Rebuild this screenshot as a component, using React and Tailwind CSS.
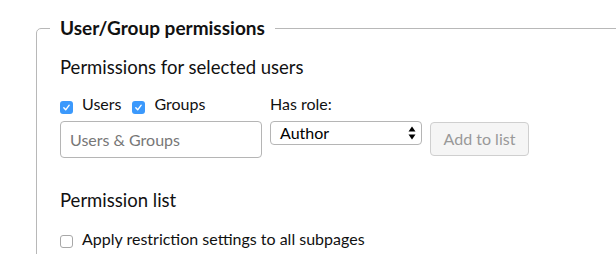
import React from "react";

function Check({ checked, className = "" }) {
  if (checked) {
    return (
      <span className={"flex h-[13px] w-[13px] shrink-0 items-center justify-center rounded-[3px] bg-[#3b99fc] " + className}>
        <svg width="9" height="9" viewBox="0 0 9 9" className="block">
          <path d="M1.8 4.8 L3.7 6.8 L7.2 2.2" fill="none" stroke="#fff" strokeWidth="1.4" strokeLinecap="round" strokeLinejoin="round" />
        </svg>
      </span>
    );
  }
  return <span className={"block h-[13px] w-[13px] shrink-0 rounded-[3px] border border-[#a8a8a8] bg-white " + className} />;
}

export default function App() {
  return (
    <div className="h-[254px] w-[616px] overflow-hidden bg-white text-[#111] [font-family:Lato,'Open_Sans',sans-serif]">
      <fieldset className="ml-[36px] mt-[17px] w-[620px] rounded-tl-[5px] border border-[#b8b8b8] pb-[40px] pl-[13px]">
        <legend className="px-[10px] text-[19px] font-bold leading-[22px]">User/Group permissions</legend>
        <div className="pl-[10px]">
          <div className="mt-[17px] text-[18.5px] leading-[22px]">Permissions for selected users</div>
          <div className="mt-[17px] flex items-start gap-[8px]">
            <div className="w-[202px]">
              <div className="flex h-[18px] items-start text-[16px] leading-[18px]">
                <Check checked className="mt-[6px]" />
                <span className="ml-[9px]">Users</span>
                <Check checked className="ml-[11px] mt-[6px]" />
                <span className="ml-[9px]">Groups</span>
              </div>
              <div className="mt-[8px] flex h-[37px] items-center rounded-[4px] border border-[#b5b5b5] px-[9px] text-[16px] text-[#777]">
                Users &amp; Groups
              </div>
            </div>
            <div className="w-[152px]">
              <div className="h-[18px] text-[16px] leading-[18px]">Has role:</div>
              <div className="mt-[8px] flex h-[24px] items-center justify-between rounded-[4px] border border-[#b5b5b5] pl-[9px] pr-[5px] text-[16px] text-black">
                <span>Author</span>
                <svg width="8" height="14" viewBox="0 0 8 14">
                  <path d="M4 0.5 L7.5 5.5 L0.5 5.5 Z" fill="#000" />
                  <path d="M4 13.5 L7.5 8.5 L0.5 8.5 Z" fill="#000" />
                </svg>
              </div>
            </div>
            <div className="pt-[27px]">
              <div className="flex h-[34px] w-[99px] items-center justify-center rounded-[4px] border border-[#cfcfcf] bg-[#f5f5f5] text-[16px] text-[#999]">
                Add to list
              </div>
            </div>
          </div>
          <div className="mt-[31px] text-[18.5px] leading-[22px]">Permission list</div>
          <div className="mt-[19px] flex items-start text-[16px] leading-[18px]">
            <Check className="mt-[5px]" />
            <span className="ml-[9px]">Apply restriction settings to all subpages</span>
          </div>
        </div>
      </fieldset>
    </div>
  );
}
